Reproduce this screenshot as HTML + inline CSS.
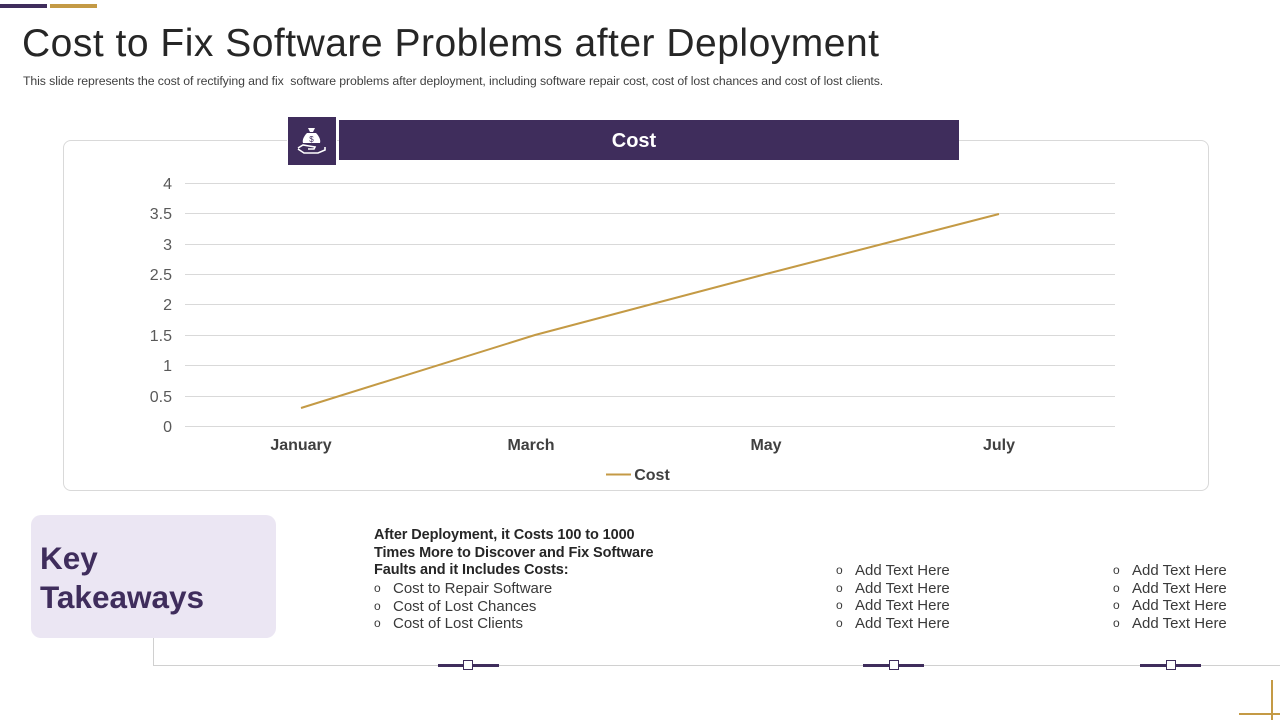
<!DOCTYPE html>
<html><head><meta charset="utf-8"><style>
*{margin:0;padding:0;box-sizing:border-box}
body{width:1280px;height:720px;position:relative;background:#fff;font-family:"Liberation Sans",sans-serif;overflow:hidden}
.a{position:absolute}
.b{font-size:15px;color:#3a3a3a}
.b div{height:17.5px;line-height:17.5px;white-space:nowrap}
.b span{display:inline-block;width:19px;font-size:12px;line-height:17.5px;vertical-align:top}
</style></head><body>
<div class="a" style="left:0;top:4px;width:47px;height:4px;background:#3f2d5c"></div>
<div class="a" style="left:50px;top:4px;width:47px;height:4px;background:#c49a45"></div>
<div class="a" style="left:22px;top:22px;font-size:39px;color:#262626;letter-spacing:0.5px">Cost to Fix Software Problems after Deployment</div>
<div class="a" style="left:23px;top:74px;font-size:12.3px;color:#404040;letter-spacing:-0.1px">This slide represents the cost of rectifying and fix &nbsp;software problems after deployment, including software repair cost, cost of lost chances and cost of lost clients.</div>
<div class="a" style="left:63px;top:140px;width:1146px;height:351px;border:1px solid #d9d9d9;border-radius:8px"></div>
<div class="a" style="left:287px;top:116px;width:50px;height:50px;background:#3f2d5c;border:1px solid #fff"></div>
<svg class="a" style="left:294px;top:122px" width="36" height="36" viewBox="0 0 36 36"><path d="M14 6h7l-2 4h-3z M13 11h9c3 3 5 7 4 10h-17c-1-3 1-7 4-10z" fill="#fff"/><text x="17.5" y="20" font-size="8" fill="#3f2d5c" text-anchor="middle" font-family="Liberation Sans">$</text><path d="M4 26l5-3 6 1 6 1-1 2h-6M4 27l6 4h14l7-3v-3" stroke="#fff" stroke-width="1.6" fill="none"/></svg>
<div class="a" style="left:339px;top:120px;width:620px;height:40px;background:#3f2d5c;color:#fff;font-weight:bold;font-size:20px;text-align:center;line-height:43px;padding-right:30px">Cost</div>
<svg class="a" style="left:0;top:0" width="1280" height="500">
<g stroke="#d9d9d9" stroke-width="1">
<line x1="185" x2="1115" y1="183.5" y2="183.5"/><line x1="185" x2="1115" y1="213.5" y2="213.5"/><line x1="185" x2="1115" y1="244.5" y2="244.5"/><line x1="185" x2="1115" y1="274.5" y2="274.5"/><line x1="185" x2="1115" y1="304.5" y2="304.5"/><line x1="185" x2="1115" y1="335.5" y2="335.5"/><line x1="185" x2="1115" y1="365.5" y2="365.5"/><line x1="185" x2="1115" y1="396.5" y2="396.5"/><line x1="185" x2="1115" y1="426.5" y2="426.5"/>
</g>
<g font-size="16" fill="#595959" text-anchor="end" font-family="Liberation Sans">
<text x="172" y="189">4</text><text x="172" y="219">3.5</text><text x="172" y="250">3</text><text x="172" y="280">2.5</text><text x="172" y="310">2</text><text x="172" y="341">1.5</text><text x="172" y="371">1</text><text x="172" y="402">0.5</text><text x="172" y="432">0</text>
</g>
<g font-size="16" fill="#404040" font-weight="bold" text-anchor="middle" font-family="Liberation Sans">
<text x="301" y="450">January</text><text x="531" y="450">March</text><text x="766" y="450">May</text><text x="999" y="450">July</text>
<text x="652" y="480">Cost</text>
</g>
<polyline points="301,408 535,335 766,274 999,214" fill="none" stroke="#c49a45" stroke-width="2"/>
<line x1="606" x2="631" y1="474.5" y2="474.5" stroke="#c49a45" stroke-width="2"/>
</svg>
<div class="a" style="left:31px;top:515px;width:245px;height:123px;background:#ebe6f3;border-radius:10px"></div>
<div class="a" style="left:40px;top:539px;font-size:31.5px;font-weight:bold;color:#3f2d5c;line-height:39px">Key<br>Takeaways</div>
<div class="a" style="left:153px;top:638px;width:1px;height:27px;background:#d0d0d0"></div>
<div class="a" style="left:153px;top:665px;width:1127px;height:1px;background:#d0d0d0"></div>
<div class="a" style="left:438px;top:664px;width:61px;height:3px;background:#3f2d5c"></div>
<div class="a" style="left:463px;top:660px;width:10px;height:10px;background:#fff;border:1px solid #3f2d5c"></div>
<div class="a" style="left:863px;top:664px;width:61px;height:3px;background:#3f2d5c"></div>
<div class="a" style="left:889px;top:660px;width:10px;height:10px;background:#fff;border:1px solid #3f2d5c"></div>
<div class="a" style="left:1140px;top:664px;width:61px;height:3px;background:#3f2d5c"></div>
<div class="a" style="left:1166px;top:660px;width:10px;height:10px;background:#fff;border:1px solid #3f2d5c"></div>
<div class="a" style="left:374px;top:527px;font-size:14.5px;font-weight:bold;color:#262626;line-height:17.5px;letter-spacing:-0.1px">After Deployment, it Costs 100 to 1000<br>Times More to Discover and Fix Software<br>Faults and it Includes Costs:</div>
<div class="a b" style="left:374px;top:580px"><div><span>o</span>Cost to Repair Software</div><div><span>o</span>Cost of Lost Chances</div><div><span>o</span>Cost of Lost Clients</div></div>
<div class="a b" style="left:836px;top:562px"><div><span>o</span>Add Text Here</div><div><span>o</span>Add Text Here</div><div><span>o</span>Add Text Here</div><div><span>o</span>Add Text Here</div></div>
<div class="a b" style="left:1113px;top:562px"><div><span>o</span>Add Text Here</div><div><span>o</span>Add Text Here</div><div><span>o</span>Add Text Here</div><div><span>o</span>Add Text Here</div></div>
<div class="a" style="left:1271px;top:680px;width:2px;height:40px;background:#c49a45"></div>
<div class="a" style="left:1239px;top:713px;width:41px;height:2px;background:#c49a45"></div>
</body></html>
